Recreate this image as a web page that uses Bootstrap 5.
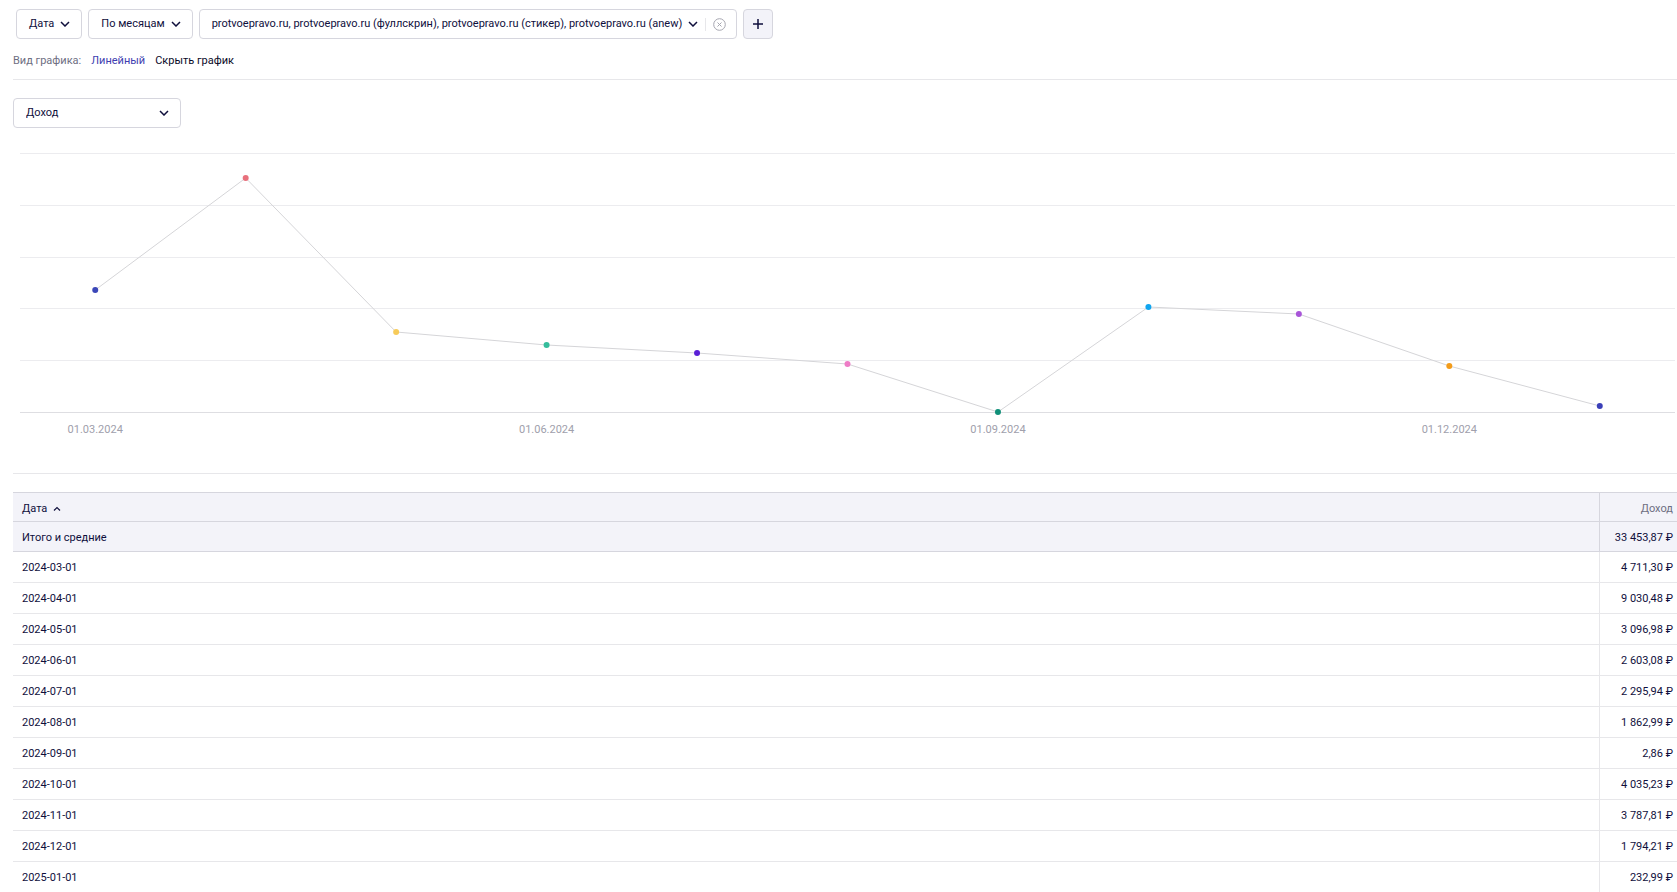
<!DOCTYPE html>
<html lang="ru">
<head>
<meta charset="utf-8">
<meta name="viewport" content="width=device-width, initial-scale=1">
<title>Статистика</title>
<link href="https://cdn.jsdelivr.net/npm/bootstrap@5.3.0/dist/css/bootstrap.min.css" rel="stylesheet">
<style>
  :root { --ink: #0f0f3c; --muted-ink: #6e6e82; --edge: #d6d6de; --rule: #e7e7ea; --tint: #f3f3f9; }
  body { font-family: Roboto, "Noto Sans", sans-serif; font-size: 11px; line-height: 16px; color: var(--ink); }
  .report { padding: 9px 0 0 13px; }
  .filters { padding-left: 3px; gap: 6px; }
  .ctl { height: 30px; border: 1px solid var(--edge); border-radius: 4px; background: #fff; color: var(--ink); font-size: 11px; line-height: 16px; }
  .drop { gap: 6px; }
  button.ctl { padding: 0 11px 0 12px; }
  .sites { padding: 0 10px 0 12px; }
  .ctl.plus { width: 30px; padding: 0; background: var(--tint); }
  .bare { border: 0; background: none; padding: 0; color: inherit; }
  .ico { fill: none; stroke: currentColor; display: block; flex: none; }
  .chev { width: 10px; height: 6px; stroke-width: 1.5; }
  .sep { width: 1px; height: 13px; margin: 0 7px; background: var(--rule); }
  .kinds { padding: 14px 0 10px; gap: 10px; border-bottom: 1px solid var(--rule); }
  .kinds span { color: var(--muted-ink); }
  .kinds a { color: #4040b0; text-decoration: none; }
  .kinds a.plain { color: #0a0a28; }
  .chartbox { padding: 18px 0; border-bottom: 1px solid var(--rule); }
  .metric { width: 168px; }
  .metric select { appearance: none; width: 100%; padding: 0 30px 0 12px; }
  .metric svg { position: absolute; right: 12px; top: 12px; pointer-events: none; }
  .plot { margin: 15px 2px 0 7px; }
  .plot svg { display: block; width: 100%; height: 312px; overflow: visible; }
  .plot .grid { stroke: #ececef; shape-rendering: crispEdges; }
  .plot .axis { stroke: #dedee2; shape-rendering: crispEdges; }
  .plot .trend { stroke: #d5d5d8; }
  .plot text { fill: #a0a0ac; text-anchor: middle; }
  .stats { margin: 18px 0 0; width: 100%; border-collapse: separate; border-spacing: 0; }
  .stats th, .stats td { padding: 2px 4px 0 9px; height: 31px; font-weight: 400; border-bottom: 1px solid var(--rule); }
  .stats .amount { width: 78px; text-align: right; border-left: 1px solid var(--rule); white-space: nowrap; }
  .stats thead th { background: var(--tint); border-color: var(--edge); height: 30px; }
  .stats thead .amount { border-left-color: var(--edge); }
  .stats thead tr:first-child th { padding-top: 3px; border-top: 1px solid var(--edge); }
  .stats thead tr:first-child .amount { color: var(--muted-ink); }
  .stats tbody tr:last-child > * { border-bottom: 0; height: 30px; }
</style>
</head>
<body>
<main class="report">
  <div class="filters d-flex align-items-center">
    <button type="button" class="ctl drop d-flex align-items-center">Дата
      <svg class="ico chev" viewBox="0 0 10 6"><path d="M1 1l4 4 4-4"/></svg></button>
    <button type="button" class="ctl drop d-flex align-items-center">По месяцам
      <svg class="ico chev" viewBox="0 0 10 6"><path d="M1 1l4 4 4-4"/></svg></button>
    <div class="ctl sites d-flex align-items-center">
      <button type="button" class="bare drop d-flex align-items-center text-nowrap">protvoepravo.ru, protvoepravo.ru (фуллскрин), protvoepravo.ru (стикер), protvoepravo.ru (anew)
        <svg class="ico chev" viewBox="0 0 10 6"><path d="M1 1l4 4 4-4"/></svg></button>
      <span class="sep"></span>
      <button type="button" class="bare" aria-label="Очистить"><svg class="ico" width="13" height="13" style="color:#a6a6b0"><circle cx="6.5" cy="6.5" r="5.8"/><path d="M4.5 4.5l4 4m0-4l-4 4"/></svg></button>
    </div>
    <button type="button" class="ctl plus d-flex align-items-center justify-content-center" aria-label="Добавить"><svg class="ico" width="10" height="10" stroke-width="1.5"><path d="M5 0v10M0 5h10"/></svg></button>
  </div>

  <nav class="kinds d-flex" aria-label="Вид графика">
    <span>Вид графика:</span>
    <a href="#line">Линейный</a>
    <a href="#hide" class="plain">Скрыть график</a>
  </nav>

  <section class="chartbox">
    <div class="metric position-relative">
      <select class="ctl" aria-label="Показатель"><option>Доход</option></select>
      <svg class="ico chev" viewBox="0 0 10 6"><path d="M1 1l4 4 4-4"/></svg>
    </div>
    <div class="plot"><svg id="plot" role="img" aria-label="Доход по месяцам"></svg></div>
  </section>

  <table class="stats">
    <thead>
      <tr><th scope="col"><span class="drop d-flex align-items-center">Дата <svg class="ico" width="8" height="5" viewBox="0 0 8 5" stroke-width="1.2"><path d="M1 4.5l3-3 3 3"/></svg></span></th><th scope="col" class="amount">Доход</th></tr>
      <tr><th scope="row">Итого и средние</th><th class="amount">33 453,87 ₽</th></tr>
    </thead>
    <tbody>
      <tr><td>2024-03-01</td><td class="amount">4 711,30 ₽</td></tr>
      <tr><td>2024-04-01</td><td class="amount">9 030,48 ₽</td></tr>
      <tr><td>2024-05-01</td><td class="amount">3 096,98 ₽</td></tr>
      <tr><td>2024-06-01</td><td class="amount">2 603,08 ₽</td></tr>
      <tr><td>2024-07-01</td><td class="amount">2 295,94 ₽</td></tr>
      <tr><td>2024-08-01</td><td class="amount">1 862,99 ₽</td></tr>
      <tr><td>2024-09-01</td><td class="amount">2,86 ₽</td></tr>
      <tr><td>2024-10-01</td><td class="amount">4 035,23 ₽</td></tr>
      <tr><td>2024-11-01</td><td class="amount">3 787,81 ₽</td></tr>
      <tr><td>2024-12-01</td><td class="amount">1 794,21 ₽</td></tr>
      <tr><td>2025-01-01</td><td class="amount">232,99 ₽</td></tr>
    </tbody>
  </table>
</main>

<script src="https://cdn.jsdelivr.net/npm/bootstrap@5.3.0/dist/js/bootstrap.bundle.min.js"></script>
<script>
  // Each month takes an equal slot of the width; values run from 0 at the axis to 10 000 at the top line.
  var points = [
    [4711.30, '#3b47b8', '01.03.2024'], [9030.48, '#e8707c'], [3096.98, '#f7cb5a'],
    [2603.08, '#35bd9c', '01.06.2024'], [2295.94, '#5a1fd6'], [1862.99, '#ee7cc6'],
    [2.86, '#0f8f78', '01.09.2024'], [4035.23, '#10a5f0'], [3787.81, '#a855d8'],
    [1794.21, '#f39c1a', '01.12.2024'], [232.99, '#3b3fb8']
  ];
  var top0 = 10, axis = 269, svg = '';
  function x(i) { return (i + 0.5) / points.length * 100 + '%'; }
  function y(v) { return Math.round(axis - v / 10000 * (axis - top0)); }
  for (var g = 0; g <= 5; g++) {
    svg += '<line class="' + (g ? 'grid' : 'axis') + '" x1="0" x2="100%" y1="' + y(g * 2000) + '" y2="' + y(g * 2000) + '"/>';
  }
  for (var i = 1; i < points.length; i++) {
    svg += '<line class="trend" x1="' + x(i - 1) + '" y1="' + y(points[i - 1][0]) + '" x2="' + x(i) + '" y2="' + y(points[i][0]) + '"/>';
  }
  points.forEach(function (p, i) {
    svg += '<circle cx="' + x(i) + '" cy="' + y(p[0]) + '" r="3" fill="' + p[1] + '"/>';
    if (p[2]) svg += '<text x="' + x(i) + '" y="' + (axis + 21) + '">' + p[2] + '</text>';
  });
  document.getElementById('plot').innerHTML = svg;
</script>
</body>
</html>
